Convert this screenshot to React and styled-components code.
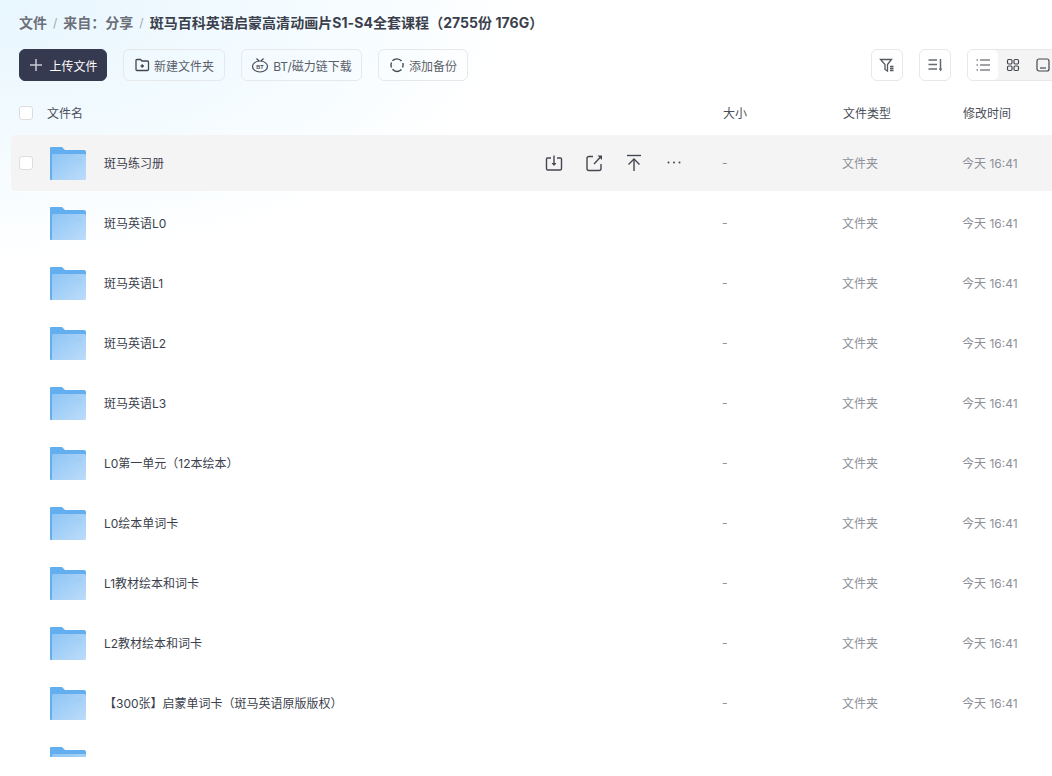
import React from "react";
import styled, { createGlobalStyle } from "styled-components";

const GlobalStyle = createGlobalStyle`
  html, body { margin: 0; padding: 0; background: #fff; height: 100%; overflow: hidden; }
  body { font-family: Inter, "Noto Sans CJK SC", "Noto Sans", sans-serif; }
`;

const Page = styled.div`
  width: 1052px;
  height: 776px;
  overflow: hidden;
  background:
    radial-gradient(ellipse 520px 260px at 0 0, #e8f6fe 0%, #f3fbff 55%, rgba(255, 255, 255, 0) 100%),
    #fff;
`;

const Crumbs = styled.div`
  display: flex;
  align-items: center;
  height: 20px;
  padding: 12px 0 0 19px;
  font-size: 14px;
  font-weight: 700;
  color: #6d7079;
`;

const Slash = styled.span`
  margin: 0 6px;
  font-size: 12px;
  font-weight: 400;
  color: #a2a5ab;
`;

const Current = styled.span`
  color: #3b3f4c;
  letter-spacing: 0.05px;
`;

const Toolbar = styled.div`
  display: flex;
  align-items: center;
  box-sizing: border-box;
  width: 1087px;
  padding: 17px 0 0 19px;
`;

const Button = styled.div`
  display: flex;
  align-items: center;
  justify-content: center;
  gap: ${(p) => p.$gap || 4}px;
  box-sizing: border-box;
  width: ${(p) => p.$w}px;
  height: 32px;
  margin-right: ${(p) => p.$mr ?? 16}px;
  border: 1px solid #e7e8ea;
  border-radius: 6px;
  font-size: 12px;
  color: #5b5e69;
  white-space: nowrap;
`;

const Primary = styled(Button)`
  background: #363a50;
  border-color: #363a50;
  color: #fff;
`;

const Spacer = styled.div`
  flex: 1;
`;

const ViewGroup = styled.div`
  display: flex;
  box-sizing: border-box;
  width: 120px;
  height: 32px;
  border: 1px solid #e7e8ea;
  border-radius: 6px;
  background: #f4f4f5;
  flex-shrink: 0;
`;

const ViewItem = styled.div`
  display: flex;
  align-items: center;
  justify-content: center;
  width: 30px;
  border-radius: 5px;
  background: ${(p) => (p.$active ? "#fff" : "transparent")};
`;

const GridRow = styled.div`
  display: grid;
  grid-template-columns: 31px 54px 1fr 120px 120px 120px;
  align-items: center;
  box-sizing: border-box;
  width: 1072px;
  margin-left: 11px;
  padding-left: 8px;
`;

const HeaderRow = styled(GridRow)`
  height: 42px;
  margin-top: 11px;
  font-size: 12px;
  color: #4a4d58;
`;

const HeadCell = styled.div`
  padding-bottom: 2px;
`;

const HeadName = styled(HeadCell)`
  grid-column: 2 / 4;
  margin-left: -3px;
`;

const List = styled.div`
  display: flex;
  flex-direction: column;
  gap: 4px;
  height: 623px;
  padding-top: 1px;
  box-sizing: border-box;
  overflow: hidden;
`;

const Row = styled(GridRow)`
  flex: none;
  height: 56px;
  border-radius: 4px;
  font-size: 12px;
  color: #8d9099;
  background: ${(p) => (p.$hover ? "#f4f4f5" : "transparent")};
`;

const Check = styled.span`
  display: block;
  box-sizing: border-box;
  width: 14px;
  height: 14px;
  border: 1px solid #dcdde0;
  border-radius: 3px;
  background: #fff;
`;

const FolderCell = styled.div`
  display: flex;
  align-items: center;
  height: 100%;
`;

const NameCell = styled.div`
  display: flex;
  align-items: center;
  justify-content: space-between;
  padding-right: 39px;
  color: #3b3f4c;
  font-size: 12px;
`;

const Name = styled.span`
  padding-bottom: 2px;
`;

const Actions = styled.div`
  display: flex;
  gap: 20px;
  color: #44474f;
`;

const ActionIcon = styled.svg`
  display: block;
  width: 20px;
  height: 20px;
  fill: none;
  stroke: currentColor;
  stroke-width: 1.4;
`;

const SmallIcon = styled.svg`
  display: block;
  width: 16px;
  height: 16px;
  fill: none;
  stroke: ${(p) => p.$color || "#44474f"};
  stroke-width: 1.3;
`;

const Muted = styled.div`
  margin-left: -1px;
  padding-bottom: 2px;
  color: #8d9099;
`;

const Folder = ({ id }) => (
  <svg width="36" height="33" viewBox="0 0 36 33" style={{ display: "block" }}>
    <defs>
      <linearGradient id={id} x1="0" y1="0" x2="1" y2="1">
        <stop offset="0" stopColor="#8ec5f4" />
        <stop offset="1" stopColor="#bcdcfa" />
      </linearGradient>
    </defs>
    <path d="M1 0h11l3 3h19a2 2 0 0 1 2 2v4H2v24H1a1 1 0 0 1-1-1V1a1 1 0 0 1 1-1z" fill="#63aeee" />
    <path d="M3.500 7h31A1.500 1.500 0 0 1 36 8.500V32a1 1 0 0 1-1 1H2V8.500A1.500 1.500 0 0 1 3.500 7z" fill={`url(#${id})`} />
    <path d="M27 12.500h5M27 14.500h5" stroke="#9ccaf1" strokeWidth="0.8" />
  </svg>
);

const names = [
  "斑马练习册",
  "斑马英语L0",
  "斑马英语L1",
  "斑马英语L2",
  "斑马英语L3",
  "L0第一单元（12本绘本）",
  "L0绘本单词卡",
  "L1教材绘本和词卡",
  "L2教材绘本和词卡",
  "【300张】启蒙单词卡（斑马英语原版版权）",
  "",
];

const RowActions = () => (
  <Actions>
    <ActionIcon viewBox="0 0 20 20">
      <path d="M7 5H3.500A1 1 0 0 0 2.500 6v9.500a1.500 1.500 0 0 0 1.500 1.500h12a1.500 1.500 0 0 0 1.500-1.500V6a1 1 0 0 0-1-1H13" />
      <path d="M10 2.500v9" />
      <path d="M7.500 10h5L10 13z" fill="currentColor" stroke="none" />
    </ActionIcon>
    <ActionIcon viewBox="0 0 20 20">
      <path d="M9 3.500H5A2 2 0 0 0 3 5.500v10a2 2 0 0 0 2 2h10a2 2 0 0 0 2-2V11" />
      <path d="M10 11l6.500-7" />
      <path d="M13.500 2.500h4.500v4.500z" fill="currentColor" stroke="none" />
    </ActionIcon>
    <ActionIcon viewBox="0 0 20 20">
      <path d="M3 2.500h14" />
      <path d="M10 18V6" />
      <path d="M4.500 11.500L10 6l5.500 5.500" />
    </ActionIcon>
    <ActionIcon viewBox="0 0 20 20">
      <circle cx="4.500" cy="9.500" r="1" fill="currentColor" stroke="none" />
      <circle cx="10" cy="9.500" r="1" fill="currentColor" stroke="none" />
      <circle cx="15.500" cy="9.500" r="1" fill="currentColor" stroke="none" />
    </ActionIcon>
  </Actions>
);

export default function App() {
  return (
    <Page>
      <GlobalStyle />
      <Crumbs>
        文件<Slash>/</Slash>来自：分享<Slash>/</Slash>
        <Current>斑马百科英语启蒙高清动画片S1-S4全套课程（2755份 176G）</Current>
      </Crumbs>
      <Toolbar>
        <Primary $w={88} $mr={16} $gap={5}>
          <SmallIcon viewBox="0 0 16 16" $color="#c9cad2" style={{ strokeWidth: 1.5 }}>
            <path d="M8 2v12M2 8h12" />
          </SmallIcon>
          上传文件
        </Primary>
        <Button $w={102}>
          <SmallIcon viewBox="0 0 16 16">
            <path d="M2 3.500a1 1 0 0 1 1-1h3.500l1.500 1.500h5.500a1 1 0 0 1 1 1v7.500a1 1 0 0 1-1 1H3a1 1 0 0 1-1-1z" />
            <path d="M6.500 9h3.500M8.200 7.200v3.600" />
          </SmallIcon>
          新建文件夹
        </Button>
        <Button $w={121}>
          <svg width="18" height="16" viewBox="0 0 18 16" fill="none" stroke="#44474f" strokeWidth="1.2">
            <ellipse cx="9" cy="9.500" rx="7.500" ry="5.500" />
            <path d="M5.500 1.500l2.500 2.500M12.500 1.500L10 4" />
            <text x="9" y="11.500" fontSize="5.500" fontWeight="700" textAnchor="middle" fill="#44474f" stroke="none" fontFamily="Liberation Sans">BT</text>
          </svg>
          BT/磁力链下载
        </Button>
        <Button $w={90}>
          <SmallIcon viewBox="0 0 16 16" style={{ strokeWidth: 1.4 }}>
            <path d="M12.500 4A6 6 0 0 0 3.500 3.800M2.500 5.500a6 6 0 0 0 0 5M3.500 12.300a6 6 0 0 0 9 .2M13.600 10.500a6 6 0 0 0 .2-4.500" />
          </SmallIcon>
          添加备份
        </Button>
        <Spacer />
        <Button $w={32}>
          <SmallIcon viewBox="0 0 16 16" $color="#55585f">
            <path d="M1.500 2.500h11L8.500 7.500v6.500L6 12.500V7.500z" />
            <path d="M11 9.500h3.500M11 11.500h3.500M11 13.500h3.500" />
          </SmallIcon>
        </Button>
        <Button $w={32}>
          <SmallIcon viewBox="0 0 16 16" $color="#66696f" style={{ strokeWidth: 1.5 }}>
            <path d="M1.500 3h8.500M1.500 7.500h8.500M1.500 12h8.500M13.500 2v11" />
            <path d="M11.800 11.500h3.400L13.500 14.500z" fill="#66696f" stroke="none" />
          </SmallIcon>
        </Button>
        <ViewGroup>
          <ViewItem $active>
            <SmallIcon viewBox="0 0 16 16" style={{ strokeWidth: 1.2 }}>
              <path d="M1.500 3h1.500M5 3h10M1.500 8h1.500M5 8h10M1.500 13h1.500M5 13h10" />
            </SmallIcon>
          </ViewItem>
          <ViewItem>
            <SmallIcon viewBox="0 0 16 16" style={{ strokeWidth: 1.2 }}>
              <rect x="2.500" y="2.500" width="4.500" height="4.500" rx="1.200" />
              <rect x="9" y="2.500" width="4.500" height="4.500" rx="1.200" />
              <rect x="2.500" y="9" width="4.500" height="4.500" rx="1.200" />
              <rect x="9" y="9" width="4.500" height="4.500" rx="1.200" />
            </SmallIcon>
          </ViewItem>
          <ViewItem>
            <SmallIcon viewBox="0 0 16 16" style={{ strokeWidth: 1.2 }}>
              <rect x="2" y="2" width="12" height="12" rx="2" />
              <path d="M5 11h6" />
            </SmallIcon>
          </ViewItem>
        </ViewGroup>
      </Toolbar>
      <HeaderRow>
        <Check />
        <HeadName>文件名</HeadName>
        <HeadCell>大小</HeadCell>
        <HeadCell>文件类型</HeadCell>
        <HeadCell>修改时间</HeadCell>
      </HeaderRow>
      <List>
        {names.map((name, i) => (
          <Row key={i} $hover={i === 0}>
            {i === 0 ? <Check /> : <span />}
            <FolderCell>
              <Folder id={`folder-fill-${i}`} />
            </FolderCell>
            <NameCell>
              <Name>{name}</Name>
              {i === 0 && <RowActions />}
            </NameCell>
            {name && <Muted>-</Muted>}
            {name && <Muted>文件夹</Muted>}
            {name && <Muted>今天 16:41</Muted>}
          </Row>
        ))}
      </List>
    </Page>
  );
}
